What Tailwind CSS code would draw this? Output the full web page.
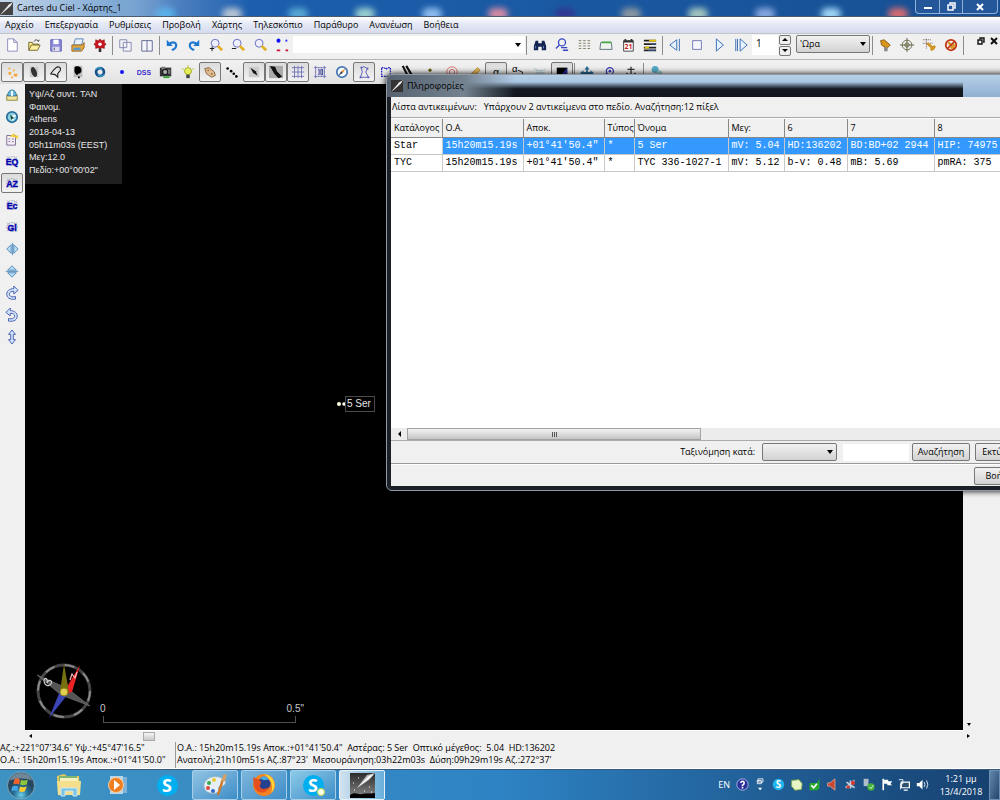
<!DOCTYPE html>
<html lang="el">
<head>
  <meta charset="UTF-8" />
  <meta name="viewport" content="width=device-width, initial-scale=1.0" />
  <title>Cartes du Ciel - Χάρτης_1</title>
  <script src="https://cdn.jsdelivr.net/npm/@tailwindcss/browser@4"></script>
</head>
<body class="relative flex h-screen flex-col overflow-hidden bg-[#f0f0f0] font-['Open_Sans','Noto_Sans',sans-serif] text-[9px] leading-[12px] text-black">

  <!-- Title bar -->
  <header class="relative flex h-[17px] shrink-0 items-center overflow-hidden border-b border-[#4c5c70] bg-linear-to-r from-[#b9cfe8] via-[#1c5fae] via-25% to-[#174f92]">
    <div id="glow" class="absolute inset-0 flex justify-between pr-[92px] pl-[155px] blur-[3px]"></div>
    <div class="absolute inset-y-0 left-0 w-44 bg-linear-to-r from-[#c5d6e9] via-[#7fa9d4] via-65% to-transparent"></div>
    <svg class="relative h-[13px] w-[13px]" viewBox="0 0 16 16"><rect width="16" height="16" fill="#444"/><path d="M0 16L11 3l5-3-3 5L4 13z" fill="#eee"/></svg>
    <h1 class="relative ml-1">Cartes du Ciel - Χάρτης_1</h1>
    <div class="absolute top-0 right-[2px] flex h-[14px] rounded-b-sm border border-t-0 border-[#8fb0d6] bg-[#24579a]">
      <button aria-label="Minimize" class="flex w-[24px] items-end justify-center border-r border-[#8fb0d6] pb-1"><span class="h-[2px] w-[8px] bg-white"></span></button>
      <button aria-label="Restore" class="flex w-[23px] items-center justify-center border-r border-[#8fb0d6]">
        <svg class="h-[9px] w-[9px]" viewBox="0 0 9 9" fill="none" stroke="#fff" stroke-width="1.5"><path d="M3 2V1h5v5H7M1 3h5v5H1z"/></svg>
      </button>
      <button aria-label="Close" class="flex w-[34px] items-center justify-center">
        <svg class="h-[8px] w-[8px]" viewBox="0 0 8 8" stroke="#fff" stroke-width="2"><path d="M1 1l6 6M7 1L1 7"/></svg>
      </button>
    </div>
  </header>

  <!-- Menu -->
  <nav class="flex h-[17px] shrink-0 items-center gap-[11px] border-b border-[#c3c3c8] bg-linear-to-b from-white via-[#e6eaf6] via-40% to-[#d5dbee] pl-[5px]">
    <a href="#">Αρχείο</a>
    <a href="#">Επεξεργασία</a>
    <a href="#">Ρυθμίσεις</a>
    <a href="#">Προβολή</a>
    <a href="#">Χάρτης</a>
    <a href="#">Τηλεσκόπιο</a>
    <a href="#">Παράθυρο</a>
    <a href="#">Ανανέωση</a>
    <a href="#">Βοήθεια</a>
  </nav>

  <!-- Main toolbar -->
  <div class="flex h-[26px] shrink-0 items-center border-b border-[#b5b5b5] pb-[3px] pl-px">
    <div class="flex" data-icons="new open save print gear"></div>
    <span class="mx-px h-[19px] w-px shrink-0 bg-[#8c8c8c]"></span>
    <div class="flex" data-icons="copy tile"></div>
    <span class="mx-px h-[19px] w-px shrink-0 bg-[#8c8c8c]"></span>
    <div class="flex" data-icons="undo redo zoomin zoomout zoom dots"></div>
    <label class="relative mb-[2px] flex h-[17px] w-[232px] bg-white">
      <input type="text" aria-label="Αναζήτηση" class="w-full px-1 outline-none" />
      <span class="absolute top-[7px] right-1 border-x-[3px] border-t-[4px] border-x-transparent border-t-black"></span>
    </label>
    <span class="mr-[2px] ml-px h-[19px] w-px shrink-0 bg-[#8c8c8c]"></span>
    <div class="flex" data-icons="binoc find list horizon calendar bars"></div>
    <span class="mx-px h-[19px] w-px shrink-0 bg-[#8c8c8c]"></span>
    <div class="flex" data-icons="prev stop play next"></div>
    <input type="text" aria-label="Βήμα" value="1" class="h-[20px] w-[26px] bg-white px-1 pb-1 text-[10px]" />
    <div class="mx-px flex w-[12px] flex-col gap-px">
      <button aria-label="Πάνω" class="flex h-[10px] items-center justify-center rounded-xs border border-[#777] bg-[#eee]"><span class="border-x-[3px] border-b-[3px] border-x-transparent border-b-black"></span></button>
      <button aria-label="Κάτω" class="flex h-[10px] items-center justify-center rounded-xs border border-[#777] bg-[#eee]"><span class="border-x-[3px] border-t-[3px] border-x-transparent border-t-black"></span></button>
    </div>
    <div class="relative mr-px ml-1 mb-[2px]">
      <select aria-label="Μονάδα" class="block h-[18px] w-[74px] appearance-none rounded-xs border border-[#777] bg-linear-to-b from-[#f2f2f2] to-[#d2d2d2] pl-[3px] leading-[14px]"><option>'Ωρα</option></select>
      <span class="absolute top-[7px] right-1 border-x-[3px] border-t-[4px] border-x-transparent border-t-black"></span>
    </div>
    <span class="mx-px h-[19px] w-px shrink-0 bg-[#8c8c8c]"></span>
    <div class="flex" data-icons="scope target slew abort"></div>
    <span class="ml-px h-[19px] w-px shrink-0 bg-[#8c8c8c]"></span>
    <div class="mb-2 ml-auto flex items-center gap-[5px] pr-[2px]">
      <button aria-label="Επαναφορά"><svg class="block h-[8px] w-[8px]" viewBox="0 0 8 8" fill="none" stroke="#111" stroke-width="1.4"><path d="M3 2V1h4v4H6M1 3h4v4H1z"/></svg></button>
      <button aria-label="Κλείσιμο"><svg class="block h-[8px] w-[8px]" viewBox="0 0 8 8" stroke="#111" stroke-width="2"><path d="M1 1l6 6M7 1L1 7"/></svg></button>
    </div>
  </div>

  <!-- Objects toolbar -->
  <div class="flex h-[24px] shrink-0 items-center bg-linear-to-b from-[#f2f2f2] to-[#e2e2e2] pl-px">
    <div class="flex" data-icons="stars* nebula* outline* darkneb galaxy dot dss camera bulb asteroid* trail comet* milky* grid* gridlab compass constel* boundary ecliptic point circles ruler alpha* alphab mirror contrast*"></div>
    <span class="mx-px h-[19px] w-px shrink-0 bg-[#8c8c8c]"></span>
    <div class="flex" data-icons="move track anchor"></div>
    <span class="mx-px h-[19px] w-px shrink-0 bg-[#8c8c8c]"></span>
    <div class="flex" data-icons="link"></div>
  </div>

  <!-- Chart area -->
  <main class="flex min-h-0 flex-1">
    <aside class="w-[25px] shrink-0 pl-px">
      <div class="flex flex-col gap-[2px] pt-px" data-icons="save2 clock setup eq az* ec gl fliph flipv rotr rotl updown"></div>
    </aside>
    <section class="flex min-w-0 flex-1 flex-col">
      <div class="relative min-h-0 flex-1 bg-black font-['Liberation_Sans',sans-serif] text-[#e6e6e6]">
        <div class="flex h-[100px] w-[97px] flex-col justify-between bg-[#202020] pt-1 pb-2 pl-1 whitespace-nowrap">
          <p>Υψ/Αζ συντ. TAN</p>
          <p>Φαινομ.</p>
          <p>Athens</p>
          <p>2018-04-13</p>
          <p>05h11m03s (EEST)</p>
          <p>Μεγ:12.0</p>
          <p>Πεδίο:+00°00'02"</p>
        </div>
        <!-- Star and its label -->
        <div class="absolute top-[312px] left-[312px] flex items-center text-[10px]">
          <svg class="h-[6px] w-[8px]" viewBox="0 0 8 6"><circle cx="2" cy="3" r="2" fill="#ffffdf"/><circle cx="7" cy="3" r="1.8" fill="#ffffef"/></svg>
          <span class="border border-[#4a4a4a] py-px pr-[3px] pl-px">5 Ser</span>
        </div>
        <!-- Compass rose -->
        <svg class="absolute bottom-2 left-[11px] h-[62px] w-[58px]" viewBox="0 0 58 62">
          <circle cx="28" cy="31" r="26" fill="none" stroke="#444" stroke-width="3"/>
          <circle cx="28" cy="31" r="26" fill="none" stroke="#8a8a8a" stroke-width="2" stroke-dasharray="10 10.4"/>
          <path d="M1 15L31 28l23 18L25 35z" fill="#555" stroke="#777" stroke-width=".6"/>
          <path d="M24 31L13 58l19-24z" fill="#3b45b5"/>
          <path d="M28 32L44 5l-8 27-6 2z" fill="#e22"/>
          <path d="M28 4l5 28h-9z" fill="#77700f"/>
          <circle cx="28" cy="32" r="4" fill="#e0d24e" stroke="#887c20"/>
          <path d="M34 20l2-6 3 4 2-6" stroke="#fbb" fill="none" stroke-width="1.2"/>
          <path d="M8 20c2-4 4 0 3 3 2-5 6-2 4 1s-7 2-7-4z" stroke="#ccc" fill="none" stroke-width="1.2"/>
        </svg>
        <!-- Scale -->
        <div class="absolute bottom-[7px] left-[78px] w-[193px] text-[10px] text-[#c8c8c8]">
          <div class="-mx-1 flex justify-between pb-px"><span class="pl-px">0</span><span class="-mr-1">0.5"</span></div>
          <div class="h-[7px] border border-t-0 border-[#505050]"></div>
        </div>
      </div>
      <div class="flex h-[11px] shrink-0 items-center border-t border-white pl-1">
        <span class="border-y-[2px] border-r-[3px] border-y-transparent border-r-black"></span>
        <button aria-label="Οριζόντια κύλιση" class="ml-[111px] h-[9px] w-[12px] border border-[#aaa] bg-linear-to-b from-[#f5f5f5] to-[#c9c9c9]"></button>
      </div>
    </section>
    <div class="flex w-[37px] shrink-0 flex-col justify-end gap-[8px] pb-[3px] pl-1">
      <span class="w-0 border-x-[2px] border-t-[3px] border-x-transparent border-t-black"></span>
      <span class="h-0 w-0 border-y-[2px] border-l-[3px] border-y-transparent border-l-black"></span>
    </div>
  </main>

  <!-- Status bar -->
  <footer class="flex h-[28px] shrink-0 border-b border-white pt-px whitespace-pre">
    <div class="w-[176px] shrink-0 border-r border-[#999]"><p>Αζ.:+221°07'34.6" Υψ.:+45°47'16.5"</p><p>Ο.Α.: 15h20m15.19s Αποκ.:+01°41'50.0"</p></div>
    <div class="pl-px"><p>Ο.Α.: 15h20m15.19s Αποκ.:+01°41'50.4"  Αστέρας: 5 Ser  Οπτικό μέγεθος:  5.04  HD:136202</p><p>Ανατολή:21h10m51s Αζ.:87°23'  Μεσουράνηση:03h22m03s  Δύση:09h29m19s Αζ.:272°37'</p></div>
  </footer>

  <!-- Taskbar -->
  <div class="flex h-[31px] shrink-0 items-stretch border-t border-[#38597c] bg-linear-to-r from-[#3f93c2] via-[#2e83c4] via-50% to-[#16406f] text-white">
    <button aria-label="Έναρξη" class="flex w-[45px] items-center pl-[6px]">
      <svg class="h-[29px] w-[30px]" viewBox="0 0 30 30">
        <defs><radialGradient id="orb" cy=".85"><stop stop-color="#6fd0e8"/><stop offset=".5" stop-color="#28749c"/><stop offset="1" stop-color="#25475f"/></radialGradient></defs>
        <circle cx="15" cy="15" r="14" fill="url(#orb)" stroke="#7fa8bc"/>
        <path d="M3 10a13 13 0 0124 0c-7-3-17-3-24 0z" fill="#fff" opacity=".35"/>
        <path d="M8 9c3-2 4-1 6 0l-1 5c-2-1-4-1-6 0z" fill="#f0642c"/><path d="M15 9c2 1 4 1 7 0l-1 5c-3 1-5 1-7 0z" fill="#8cc63e"/>
        <path d="M6 16c3-1 4-1 6 0l-1 5c-2-1-3-1-6 0z" fill="#42a5e8"/><path d="M14 16c2 1 4 1 7 0l-2 5c-2 1-4 1-6 0z" fill="#fccb32"/>
      </svg>
    </button>
    <button aria-label="Εξερεύνηση" class="flex w-[48px] items-center justify-center">
      <svg class="h-[24px] w-[26px]" viewBox="0 0 26 24"><path d="M1 3l7-2 3 2h12l1 17H2z" fill="#e8c95c"/><path d="M3 3h18v8H3z" fill="#7db673"/><path d="M4 5h18v7H4z" fill="#f7f0c0"/><path d="M1 8h24l-1 14H2z" fill="#f5df8c"/><path d="M5 23v-8h16v8h-4v-5H9v5z" fill="#7cc4e4" stroke="#c6e8f5"/></svg>
    </button>
    <button aria-label="Media Player" class="flex w-[49px] items-center justify-center">
      <svg class="h-[20px] w-[22px]" viewBox="0 0 22 20"><path d="M7 2h13v16H7z" fill="#7fb2d8"/><path d="M3 1h13v18H3z" fill="#b7d6ea"/><circle cx="9" cy="10" r="7.500" fill="#ef7d22" stroke="#f8cfa0"/><path d="M7 5l6 5-6 5z" fill="#fff"/></svg>
    </button>
    <button aria-label="Skype" class="flex w-[50px] items-center justify-center">
      <span class="flex h-[21px] w-[21px] items-center justify-center rounded-full bg-[#00aff0] text-[18px] font-bold">S</span>
    </button>
    <div class="flex gap-[3px]">
      <button aria-label="Ζωγραφική" class="flex w-[46px] items-center justify-center rounded-xs border border-[#a8cfea] bg-linear-to-br from-[#91c4e2] to-[#3c8dc8]">
        <svg class="h-[24px] w-[26px]" viewBox="0 0 26 24"><path d="M2 14C1 7 9 2 17 4c8 2 8 8 3 9-4 0-4 2-3 4 0 5-14 5-15-3z" fill="#e4eef4" stroke="#9bb6c6"/><circle cx="7" cy="10" r="2" fill="#36a94a"/><circle cx="12" cy="7" r="2" fill="#e9c92e"/><circle cx="6" cy="15" r="2" fill="#d44"/><circle cx="11" cy="18" r="2" fill="#36c"/><path d="M16 22l5-16" stroke="#c97a2c" stroke-width="2.500"/><path d="M20 8l1-6 4-1-2 7z" fill="#d9a066"/></svg>
      </button>
      <button aria-label="Firefox" class="flex w-[46px] items-center justify-center rounded-xs border border-[#a8cfea] bg-linear-to-br from-[#7db6dc] to-[#3c8dc8]">
        <svg class="h-[24px] w-[24px]" viewBox="0 0 24 24"><circle cx="12" cy="12" r="11" fill="#f58220"/><path d="M12 1c10 1 14 12 7 19 2-5 2-12-7-19z" fill="#ffd23a"/><circle cx="12" cy="11" r="6.500" fill="#25408f"/><path d="M8 5c3-3 8-2 9 2-4-1-5 2-9-2z" fill="#48a8e0"/><path d="M1 4c2 2 6 1 8 5 0 3-2 3-1 5 2 3 6 2 9 0-2 7-12 8-15-1z" fill="#e6501e"/></svg>
      </button>
      <button aria-label="Skype" class="relative flex w-[46px] items-center justify-center rounded-xs border border-[#a8cfea] bg-linear-to-br from-[#8ccbe8] to-[#3c8dc8]">
        <span class="flex h-[21px] w-[21px] items-center justify-center rounded-full bg-[#00aff0] text-[18px] font-bold">S</span>
        <span class="absolute right-[10px] bottom-[3px] h-[8px] w-[8px] rounded-full border border-[#b6d84a] bg-[#fdfdea]"></span>
      </button>
      <button aria-label="Cartes du Ciel" class="flex w-[46px] items-center justify-center rounded-xs border border-[#e6f2fa] bg-linear-to-r from-[#d2e2ee] to-[#68b0dc]">
        <svg class="h-[25px] w-[25px]" viewBox="0 0 25 25"><defs><linearGradient id="sky" x2="0" y2="1"><stop stop-color="#2c2c2c"/><stop offset="1" stop-color="#8a8a8a"/></linearGradient></defs><path d="M0 0h25v25H0z" fill="url(#sky)"/><path d="M7 15L17 2l8-2-6 7z" fill="#bbb"/><path d="M7 15L19 3l5-2-4 4z" fill="#fff"/><path d="M0 22c5-4 8 0 12-1s9 0 13-1v5H0z" fill="#000"/><path d="M3 10h1M8 5h1M19 14h1M14 18h1M4 17h1M21 19h1" stroke="#fff"/></svg>
      </button>
    </div>
    <div class="ml-auto flex items-center pb-px" data-tray></div>
    <div class="w-[56px] pt-[2px] text-center leading-[13px]"><p>1:21 μμ</p><p>13/4/2018</p></div>
    <button aria-label="Επιφάνεια εργασίας" class="w-[11px] border border-[#6e8fb0] bg-linear-to-br from-[#6488ac] to-[#24466e]"></button>
  </div>

  <!-- Information window -->
  <div role="dialog" aria-labelledby="dlgTitle" class="absolute top-[74px] -right-[80px] left-[386px] flex h-[417px] flex-col rounded-md border border-[#8f9aa5] bg-[#1b2026] px-1 pb-[4px] shadow-[0_0_6px_#000]">
    <div class="-mx-1 flex h-[22px] shrink-0 items-center overflow-hidden rounded-t-md bg-linear-to-b from-[#b7cfe8] to-[#8fb0d2]">
      <div class="absolute top-[7px] right-[116px] left-0 h-[15px] bg-linear-to-b from-[#26303a]/0 via-[#141b22] via-45% to-[#10161c]"></div>
      <div class="absolute top-0 left-0 h-[22px] w-32 rounded-tl-md bg-linear-to-r from-[#56626f] via-[#74828f] via-60% to-transparent"></div>
      <svg class="relative ml-1 h-[12px] w-[12px]" viewBox="0 0 16 16"><rect width="16" height="16" fill="#333"/><path d="M0 16L11 3l5-3-3 5L4 13z" fill="#eee"/></svg>
      <h2 id="dlgTitle" class="relative ml-1">Πληροφορίες</h2>
    </div>
    <div class="flex min-h-0 flex-1 flex-col bg-[#f0f0f0]">
      <p class="h-[21px] shrink-0 border-b border-[#a8a8a8] pt-1 pl-px whitespace-pre">Λίστα αντικειμένων:   Υπάρχουν 2 αντικείμενα στο πεδίο. Αναζήτηση:12 πίξελ</p>
      <div class="min-h-0 flex-1 overflow-hidden bg-white pt-px">
        <table class="w-[640px] table-fixed border-collapse font-['Liberation_Mono',monospace] text-[10px] whitespace-nowrap">
          <colgroup>
            <col class="w-[51px]" /><col class="w-[81px]" /><col class="w-[81px]" /><col class="w-[30px]" /><col class="w-[94px]" /><col class="w-[56px]" /><col class="w-[63px]" /><col class="w-[87px]" /><col />
          </colgroup>
          <thead id="tableHead" class="font-['Open_Sans','Noto_Sans',sans-serif] text-[9px]"></thead>
          <tbody id="tableBody"></tbody>
        </table>
      </div>
      <div class="flex h-[13px] shrink-0 items-center border-b border-[#aaa] bg-[#ececec] pl-[7px]">
        <span class="border-y-[3px] border-r-[3px] border-y-transparent border-r-black"></span>
        <button aria-label="Κύλιση" class="ml-[6px] flex h-[12px] w-[294px] items-center justify-center gap-px border border-[#a2a2a2] bg-linear-to-b from-[#f4f4f4] to-[#c4c4c4]">
          <span class="h-[5px] w-px bg-[#555]"></span><span class="h-[5px] w-px bg-[#555]"></span><span class="h-[5px] w-px bg-[#555]"></span>
        </button>
      </div>
      <div class="flex h-[23px] shrink-0 items-center border-b border-[#999]">
        <label for="sortBy" class="ml-auto pr-[7px]">Ταξινόμηση κατά:</label>
        <div class="relative">
          <select id="sortBy" class="block h-[18px] w-[75px] appearance-none rounded-xs border border-[#777] bg-linear-to-b from-[#f2f2f2] to-[#d2d2d2]"><option></option></select>
          <span class="absolute top-[7px] right-1 border-x-[3px] border-t-[4px] border-x-transparent border-t-black"></span>
        </div>
        <input type="text" aria-label="Κείμενο αναζήτησης" class="mr-[3px] ml-[6px] h-[17px] w-[66px] bg-white px-1" />
        <button class="h-[18px] w-[58px] rounded-xs border border-[#777] bg-linear-to-b from-[#f2f2f2] to-[#d2d2d2]">Αναζήτηση</button>
        <button class="mr-[42px] ml-[5px] h-[18px] w-[58px] rounded-xs border border-[#777] bg-linear-to-b from-[#f2f2f2] to-[#d2d2d2]">Εκτύπωση</button>
      </div>
      <div class="flex h-[22px] shrink-0 items-center border-t border-white">
        <button class="mr-[43px] ml-auto h-[18px] w-[58px] rounded-xs border border-[#777] bg-linear-to-b from-[#f2f2f2] to-[#d2d2d2]">Βοήθεια</button>
      </div>
    </div>
  </div>

  <script>
    // Toolbar drawings, all on a 16x16 grid
    const LENS = '<circle cx="7" cy="6" r="4.500" fill="#eef" stroke="#5a62b8"/><path d="M10 9l5 5" stroke="#e0b020" stroke-width="3"/>';
    const GLOBE = '<ellipse cx="8" cy="8" rx="6" ry="5" fill="none" stroke="#89a" stroke-dasharray="2 1"/><path d="M2 3l12 10M14 3L2 13" stroke="#99b" stroke-width=".7"/>';
    const lettered = (s) => GLOBE + `<text x="8" y="12" text-anchor="middle" font-family="Liberation Sans" font-weight="bold" font-size="10" fill="#0000b0" stroke="#0000b0" stroke-width=".4">${s}</text>`;
    const ICONS = {
      new: '<path d="M3 1h7l4 4v10H3zM10 1v4h4" fill="#fff" stroke="#8484b8"/>',
      open: '<path d="M2 14V5h4l1 2h6v2" fill="#ffe98a" stroke="#665c20"/><path d="M2 14l3-6h10l-3 6z" fill="#fff0a0" stroke="#665c20"/><path d="M8 4c2-3 4-2 5 0l1-2" fill="none" stroke="#222"/>',
      save: '<path d="M2 2h12v13H2z" fill="#8c8cdc" stroke="#5656ae"/><path d="M5 2h6v5H5z" fill="#fff"/><path d="M4 10h8v5H4z" fill="#dde"/><path d="M6 11v3" stroke="#446"/>',
      print: '<path d="M5 1h9l-2 7H3z" fill="#e9f2fc" stroke="#4b79b4"/><path d="M1 8h12l2-3v6l-3 4H1z" fill="#e6a839" stroke="#936522"/><path d="M3 11h8v3H3z" fill="#5c96cf"/>',
      gear: '<path d="M8 1l2 2 3-1v3l2 2-2 2v3l-3-1-2 2-2-2-3 1V9L1 7l2-2V2l3 1z" fill="#c8141e" stroke="#700" stroke-width=".5"/><circle cx="8" cy="7" r="2" fill="#fff"/><path d="M8 12v4" stroke="#333" stroke-width="3"/>',
      copy: '<path d="M2 2h8v9H2zM6 5h9v10H6z" fill="#f4f4fa" stroke="#7a80a8"/>',
      tile: '<path d="M2 3h12v12H2zM8 3v12" fill="#f4f4fa" stroke="#55608a"/>',
      undo: '<path d="M4 8c5-6 11-2 8 3-1 2-3 2-4 3" fill="none" stroke="#1f78cf" stroke-width="2.500"/><path d="M2 2v7h7z" fill="#1f78cf"/>',
      redo: '<path d="M12 8C7 2 1 6 4 11c1 2 3 2 4 3" fill="none" stroke="#1f78cf" stroke-width="2.500"/><path d="M14 2v7H7z" fill="#1f78cf"/>',
      zoomin: LENS + '<path d="M1 12h5M3.500 10v5" stroke="#000"/>',
      zoomout: LENS + '<path d="M1 12h5" stroke="#000"/>',
      zoom: LENS,
      dots: '<circle cx="4" cy="3" r="2.300" fill="#11f"/><circle cx="13" cy="3" r="1.200" fill="#33f"/><path d="M2 14h4M12 14h3" stroke="#d01030" stroke-width="2"/>',
      binoc: '<path d="M3 3h3v3h4V3h3l2 6v5h-5v-4H6v4H1V9z" fill="#132452"/><path d="M3 9v3M12 9v3" stroke="#6c88c4"/>',
      find: '<circle cx="8" cy="5" r="4" fill="none" stroke="#3446c0" stroke-width="1.500"/><path d="M5 8l-4 4M7 11h7M9 14h6" stroke="#3446c0" stroke-width="1.500"/>',
      list: '<path d="M2 3h3M7 3h3M12 3h3M2 6h3M7 6h3M12 6h3M2 9h3M7 9h3M12 9h3M2 12h3M7 12h3M12 12h3" stroke="#77735c"/>',
      horizon: '<path d="M2 5h12l1 8H1z" fill="#eef4ee" stroke="#567"/><path d="M3 5h11" stroke="#46a847" stroke-width="2"/>',
      calendar: '<path d="M3 3h11v12H3z" fill="#fff" stroke="#333"/><path d="M3 4h11M5 1v3M12 1v3" stroke="#333" stroke-width="2"/><text x="8.500" y="13" text-anchor="middle" font-size="8" font-weight="bold" fill="#c22">21</text>',
      bars: '<path d="M1 3h14M1 7h14M1 11h14M1 14h14" stroke="#222" stroke-width="2"/><path d="M7 3h8M2 11h5" stroke="#e4c300" stroke-width="2"/><path d="M9 7h6M6 14h8" stroke="#3f5fae"/>',
      prev: '<path d="M10 2v12L2 8zM13 1v14" fill="#e6f2ff" stroke="#2a64b0"/>',
      stop: '<path d="M3 3h10v10H3z" fill="#f6f6fc" stroke="#6670b0"/>',
      play: '<path d="M5 1v14l8-7z" fill="#e6f2ff" stroke="#2a64b0"/>',
      next: '<path d="M7 1v14l8-7zM2 1v14M4 1v14" fill="#e6f2ff" stroke="#2a64b0"/>',
      scope: '<path d="M3 3l4-1 7 6-4 4-6-4z" fill="#d8951c" stroke="#855710"/><path d="M7 10v5h4v-4" fill="#888"/>',
      target: '<circle cx="8" cy="8" r="5.500" fill="none" stroke="#664"/><circle cx="8" cy="8" r="2.500" fill="none" stroke="#664"/><path d="M8 0v16M0 8h16" stroke="#553"/>',
      slew: '<path d="M5 1v12M1 6h11M1 2h10" stroke="#644" stroke-dasharray="1 1"/><path d="M6 6l8 7M10 14l5-5" stroke="#cf941d" stroke-width="3"/>',
      abort: '<path d="M5 5l7 7M8 12l4-5" stroke="#d79a22" stroke-width="3"/><circle cx="8" cy="8" r="6" fill="none" stroke="#c23310" stroke-width="2"/><path d="M4 12l8-8" stroke="#c23310" stroke-width="2"/>',
      stars: '<path d="M4 3h2v2H4zM9 5h2v2H9zM4 8h3v3H4zM10 10h4v3h-4zM7 13h2v2H7z" fill="#f3a93b"/>',
      nebula: '<path d="M3 2h10v12H3z" fill="#ccc"/><ellipse cx="8" cy="8" rx="3" ry="6" transform="rotate(-20 8 8)" fill="#333"/>',
      outline: '<path d="M8 3c3-2 6 0 5 3l-3 4v4l-3-3-5-1 3-4z" fill="none" stroke="#222" stroke-width="1.300"/>',
      darkneb: '<path d="M3 1h10v13H3z" fill="#bbb"/><path d="M4 3c2-3 8-2 8 3s-5 3-4 5H6L4 8z" fill="#000"/><path d="M8 13h2v2H8z" fill="#000"/>',
      galaxy: '<circle cx="8" cy="8" r="4.500" fill="none" stroke="#174f88" stroke-width="3"/><path d="M3 5c3-3 7-2 7 1M13 11c-3 3-7 2-7-1" stroke="#3aa3cc" fill="none" stroke-width="1.500"/>',
      dot: '<circle cx="8" cy="8" r="2.300" fill="#1616f4"/>',
      dss: '<text x="8" y="11" text-anchor="middle" font-family="Liberation Sans" font-size="8" font-weight="bold" fill="#3b2fcb">DSS</text>',
      camera: '<path d="M1 3h13v10H1z" fill="#333"/><path d="M3 2h4v3H3zM10 5h3v5h-3z" fill="#777"/><circle cx="7" cy="8" r="3" fill="#aaa" stroke="#000"/><path d="M5 14h7" stroke="#3a3" stroke-width="2"/>',
      bulb: '<circle cx="8" cy="7" r="4" fill="#e5f05a" stroke="#99a51c"/><path d="M6 11h4v4H6z" fill="#444"/><path d="M1 4l2 1M15 4l-2 1M8 0v2" stroke="#b7c21c"/>',
      asteroid: '<path d="M2 4l5-1 6 5 1 4-4 2-6-4z" fill="#e1bd8f" stroke="#7e5a38"/><circle cx="6" cy="6" r="1" fill="#8c6a46"/><circle cx="10" cy="10" r="1" fill="#8c6a46"/>',
      trail: '<circle cx="3" cy="4" r="1.500"/><circle cx="7" cy="7" r="1.500"/><circle cx="10" cy="10" r="1.500"/><circle cx="13" cy="13" r="1.500"/>',
      comet: '<path d="M2 2h12v12H2z" fill="#ccc"/><path d="M4 3l6 4 2 5-5-3z" fill="#111"/>',
      milky: '<path d="M0 1h16v14H0z" fill="#aaa"/><path d="M1 1l6 1 2 5 6 6-4 2-5-5z" fill="#111"/>',
      grid: '<path d="M1 3h14M1 8h14M1 13h14M4 1v14M8 1v14M12 1v14" stroke="#6c70b8"/>',
      gridlab: '<path d="M1 3h14M1 13h14M3 1v14M13 1v14" stroke="#6c70b8"/><path d="M6 5h1v6H6M9 5h2v6H9z" fill="none" stroke="#24248c"/>',
      compass: '<circle cx="8" cy="8" r="6" fill="#f7fbff" stroke="#4777b6" stroke-width="2"/><path d="M12 4L9 9 7 7z" fill="#e58b20"/><path d="M4 12l3-5 2 2z" fill="#345"/>',
      constel: '<path d="M5 3l3-1 4 2-2 4 3 6H4l2-6z" fill="none" stroke="#5658b8"/><path d="M4 2h2v2H4zM11 3h2v2h-2zM3 13h2v2H3zM12 13h2v2h-2z" fill="#5658b8"/>',
      boundary: '<path d="M3 3h3l2 2 2-2h3v10H3z" fill="none" stroke="#2323c8" stroke-width="1.500" stroke-dasharray="2 1"/>',
      ecliptic: '<path d="M2 1l5 10M6 1l6 10" stroke="#111" stroke-width="2.500"/>',
      point: '<path d="M8 4v4M6 6h4" stroke="#550" stroke-width="1.500"/>',
      circles: '<circle cx="8" cy="8" r="6" fill="none" stroke="#d66"/><circle cx="8" cy="8" r="3" fill="none" stroke="#d66"/>',
      ruler: '<path d="M2 13L12 3l3 3L6 14z" fill="#e4b95b" stroke="#b48628"/>',
      alpha: '<text x="8" y="12" text-anchor="middle" font-family="Liberation Sans" font-size="12">α</text>',
      alphab: '<text x="1" y="8" font-family="Liberation Sans" font-size="11">α</text><path d="M8 6l5 2v4" fill="none" stroke="#000"/>',
      mirror: '<path d="M1 4q7 5 14 0M3 9h10M2 12h12" fill="none" stroke="#6aaac4" stroke-dasharray="2 1"/>',
      contrast: '<path d="M2 3h12v11H2z" fill="#000"/><path d="M14 3v11H5z" fill="#24249c"/>',
      move: '<path d="M8 1l3 4H9v3h3V6l4 3-4 3H4L0 9l4-3v2h3V5H5z" fill="#2c6c96"/>',
      track: '<circle cx="9" cy="7" r="4" fill="none" stroke="#3438b4" stroke-width="1.500"/><circle cx="9" cy="7" r="1.500" fill="#3438b4"/><path d="M1 11l6-1" stroke="#3438b4"/>',
      anchor: '<path d="M8 2v12M4 5h8M3 9q5 8 10 0" fill="none" stroke="#333" stroke-width="1.500"/>',
      link: '<circle cx="7" cy="5" r="4" fill="#55a9c4"/><circle cx="12" cy="9" r="3" fill="#9cc"/>',
      save2: '<path d="M2 8h12v6H2z" fill="#f4e39a" stroke="#87803a"/><path d="M3 9c0-9 10-9 10 0z" fill="#6cb9da" stroke="#256d94"/><path d="M8 3v6" stroke="#fff" stroke-width="2"/>',
      clock: '<circle cx="8" cy="8" r="6" fill="#8fd4e4" stroke="#29709c" stroke-width="2"/><path d="M8 8l4-2M8 8l1 4" stroke="#fff" stroke-width="2"/><path d="M6 5l4 4-3 2z" fill="#143"/>',
      setup: '<path d="M2 4h10v11H2z" fill="#f3eef8" stroke="#76618c"/><path d="M4 8h2M8 8h2M4 11h2M8 11h2" stroke="#76618c"/><path d="M5 5l6-4v3h4v4l-4-2z" fill="#f2cf38"/>',
      eq: lettered('EQ'), az: lettered('AZ'), ec: lettered('Ec'), gl: lettered('Gl'),
      fliph: '<path d="M7 3v10L2 8zM10 3v10l5-5z" fill="#b8dcf4" stroke="#4a86b8"/><path d="M8.500 1v14" stroke="#4a86b8"/>',
      flipv: '<path d="M3 7h10L8 2zM3 10h10l-5 5z" fill="#b8dcf4" stroke="#4a86b8"/><path d="M1 8.500h14" stroke="#4a86b8"/>',
      rotr: '<path d="M12 12v3C5 16 2 13 2 9c0-3 3-6 8-6V0l5 5-5 4V6C7 6 5 7 5 9c0 3 3 4 7 3z" fill="#d2e4fa" stroke="#3c54ac"/>',
      rotl: '<path d="M4 12v3c7 1 10-2 10-6 0-3-3-6-8-6V0L1 5l5 4V6c3 0 5 1 5 3 0 3-3 4-7 3z" fill="#d2e4fa" stroke="#3c54ac"/>',
      updown: '<path d="M8 0l4 5H9.500v6H12l-4 5-4-5h2.500V5H4z" fill="#d2e4fa" stroke="#3c54ac"/>'
    };

    // A star after the name marks a pressed button
    document.querySelectorAll('[data-icons]').forEach((bar) => {
      bar.innerHTML = bar.dataset.icons.split(' ').map((item) => {
        const name = item.replace('*', '');
        const look = item.endsWith('*') ? 'rounded-xs border border-[#777] bg-linear-to-b from-[#dcdcdc] to-[#f2f2f2]' : '';
        return `<button aria-label="${name}" class="flex h-[20px] w-[22px] shrink-0 items-center justify-center ${look}"><svg class="h-[14px] w-[14px] shrink-0" viewBox="0 0 16 16">${ICONS[name]}</svg></button>`;
      }).join('');
    });

    // Tray icons
    const TRAY = [
      '<circle cx="8" cy="8" r="7" fill="#2b2f9c" stroke="#c3c9ee"/><path d="M6 6q0-2 2-2t2 2-2 3v1M8 11v2" fill="none" stroke="#fff" stroke-width="2"/>',
      '<path d="M5 1h6v4H5zM4 3h5v4H4z" fill="#2a5b94" stroke="#fff"/><path d="M5 12h5l-2.500 3z" fill="#fff"/>',
      '<circle cx="8" cy="8" r="7" fill="#1fb5ee"/><text x="8" y="12" text-anchor="middle" font-size="12" font-weight="bold" fill="#fff">S</text>',
      '<path d="M2 3l9-1 4 5-1 7-8 1-4-5z" fill="#e6f4c8" stroke="#7fae40"/>',
      '<path d="M2 6h9l3-5v12l-3 2H2z" fill="#28a92e"/><path d="M4 9l3 3 4-5" stroke="#fff" fill="none" stroke-width="2"/>',
      '<path d="M2 6h3l6-5v14l-6-5H2z" fill="#c8452f" stroke="#e4aa9c"/>',
      '<path d="M2 12L13 3M3 5l10 7M8 3v10" stroke="#c3d0de" stroke-width="2"/><circle cx="11" cy="6" r="2.500" fill="#dd3a2c"/><circle cx="5" cy="11" r="2" fill="#dd3a2c"/>',
      '<path d="M2 1h6v9H2z" fill="#aebccb"/><circle cx="11" cy="11" r="4.500" fill="#45b23c"/><path d="M9 11l2 2 3-4" stroke="#fff" fill="none"/>',
      '<path d="M4 1v14" stroke="#fff" stroke-width="2"/><path d="M5 2h5v2h5l-2 3 2 2H9V7H5z" fill="#fff"/>',
      '<path d="M4 5h10v7H4zM7 15h5" fill="#30506f" stroke="#fff" stroke-width="1.500"/><path d="M1 2h5v5H3v7" fill="none" stroke="#fff"/>',
      '<path d="M1 6h3l4-4v12l-4-4H1z" fill="#fff"/><path d="M10 5q2 3 0 6M13 3q3 5 0 10" fill="none" stroke="#fff"/>'
    ];
    document.querySelector('[data-tray]').innerHTML = '<span class="pr-[3px]">EN</span>' + TRAY.map((d) =>
      `<button aria-label="tray" class="flex w-[18px] justify-center"><svg class="h-[13px] w-[13px]" viewBox="0 0 16 16">${d}</svg></button>`).join('') + '<span class="w-[2px]"></span>';

    // Blurred desktop icons behind the title bar glass
    document.getElementById('glow').innerHTML = ['#52b4ee', '#b8c6d4', '#58a8d4', '#9cd0d0', '#90bdf0', '#d88ca4', '#303894', '#8c98a0', '#a8c8c0', '#88a8e0', '#a0d8f8', '#d86c70'].map((c) =>
      `<span class="mt-2 h-3 w-5 rounded-full" style="background:${c}"></span>`).join('');

    // Object list
    const HEAD = ['Κατάλογος', 'Ο.Α.', 'Αποκ.', 'Τύπος', 'Όνομα', 'Μεγ:', '6', '7', '8'];
    const ROWS = [
      ['Star', '15h20m15.19s', '+01°41\'50.4"', '*', '5 Ser', 'mV: 5.04', 'HD:136202', 'BD:BD+02 2944', 'HIP: 74975'],
      ['TYC', '15h20m15.19s', '+01°41\'50.4"', '*', 'TYC 336-1027-1', 'mV: 5.12', 'b-v: 0.48', 'mB: 5.69', 'pmRA: 375']
    ];
    document.getElementById('tableHead').innerHTML = '<tr class="h-[18px] bg-[#f0f0f0]">' + HEAD.map((h) =>
      `<th class="border-r border-b border-[#888] pl-[3px] text-left font-normal">${h}</th>`).join('') + '</tr>';
    document.getElementById('tableBody').innerHTML = ROWS.map((row, r) => '<tr class="h-[17px]">' + row.map((cell, c) =>
      `<td class="border-r border-b border-[#c8c8c8] pl-[3px] ${r === 0 && c > 0 ? 'bg-[#3399ff] text-white' : ''}">${cell}</td>`).join('') + '</tr>').join('');
  </script>
</body>
</html>
